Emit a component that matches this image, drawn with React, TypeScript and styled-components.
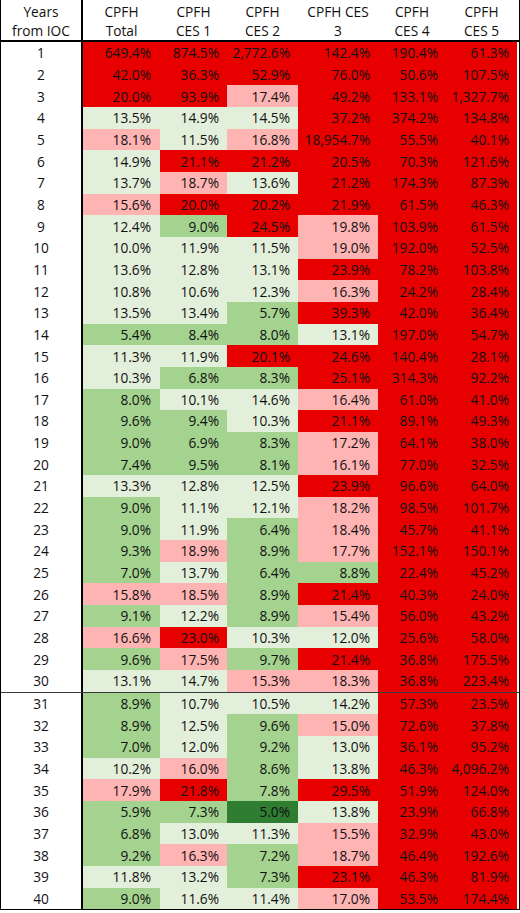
import React from "react"
import styled, { createGlobalStyle } from "styled-components"

type Fill = "R" | "P" | "L" | "G" | "D"

const fills: Record<Fill, string> = {
	R: "#e80000",
	P: "#ffb4b4",
	L: "#e2efda",
	G: "#a3d38f",
	D: "#2e7d31",
}

// header captions, one entry per line as wrapped in the sheet
const headers = [
	["Years", "from IOC"],
	["CPFH", "Total"],
	["CPFH", "CES 1"],
	["CPFH", "CES 2"],
	["CPFH CES", "3"],
	["CPFH", "CES 4"],
	["CPFH", "CES 5"],
]

// each row: six "value fill" pairs, values as shown (without the % sign)
const raw = `
649.4 R|874.5 R|2,772.6 R|142.4 R|190.4 R|61.3 R
42.0 R|36.3 R|52.9 R|76.0 R|50.6 R|107.5 R
20.0 R|93.9 R|17.4 P|49.2 R|133.1 R|1,327.7 R
13.5 L|14.9 L|14.5 L|37.2 R|374.2 R|134.8 R
18.1 P|11.5 L|16.8 P|18,954.7 R|55.5 R|40.1 R
14.9 L|21.1 R|21.2 R|20.5 R|70.3 R|121.6 R
13.7 L|18.7 P|13.6 L|21.2 R|174.3 R|87.3 R
15.6 P|20.0 R|20.2 R|21.9 R|61.5 R|46.3 R
12.4 L|9.0 G|24.5 R|19.8 P|103.9 R|61.5 R
10.0 L|11.9 L|11.5 L|19.0 P|192.0 R|52.5 R
13.6 L|12.8 L|13.1 L|23.9 R|78.2 R|103.8 R
10.8 L|10.6 L|12.3 L|16.3 P|24.2 R|28.4 R
13.5 L|13.4 L|5.7 G|39.3 R|42.0 R|36.4 R
5.4 G|8.4 G|8.0 G|13.1 L|197.0 R|54.7 R
11.3 L|11.9 L|20.1 R|24.6 R|140.4 R|28.1 R
10.3 L|6.8 G|8.3 G|25.1 R|314.3 R|92.2 R
8.0 G|10.1 L|14.6 L|16.4 P|61.0 R|41.0 R
9.6 G|9.4 G|10.3 L|21.1 R|89.1 R|49.3 R
9.0 G|6.9 G|8.3 G|17.2 P|64.1 R|38.0 R
7.4 G|9.5 G|8.1 G|16.1 P|77.0 R|32.5 R
13.3 L|12.8 L|12.5 L|23.9 R|96.6 R|64.0 R
9.0 G|11.1 L|12.1 L|18.2 P|98.5 R|101.7 R
9.0 G|11.9 L|6.4 G|18.4 P|45.7 R|41.1 R
9.3 G|18.9 P|8.9 G|17.7 P|152.1 R|150.1 R
7.0 G|13.7 L|6.4 G|8.8 G|22.4 R|45.2 R
15.8 P|18.5 P|8.9 G|21.4 R|40.3 R|24.0 R
9.1 G|12.2 L|8.9 G|15.4 P|56.0 R|43.2 R
16.6 P|23.0 R|10.3 L|12.0 L|25.6 R|58.0 R
9.6 G|17.5 P|9.7 G|21.4 R|36.8 R|175.5 R
13.1 L|14.7 L|15.3 P|18.3 P|36.8 R|223.4 R
8.9 G|10.7 L|10.5 L|14.2 L|57.3 R|23.5 R
8.9 G|12.5 L|9.6 G|15.0 P|72.6 R|37.8 R
7.0 G|12.0 L|9.2 G|13.0 L|36.1 R|95.2 R
10.2 L|16.0 P|8.6 G|13.8 L|46.3 R|4,096.2 R
17.9 P|21.8 R|7.8 G|29.5 R|51.9 R|124.0 R
5.9 G|7.3 G|5.0 D|13.8 L|23.9 R|66.8 R
6.8 G|13.0 L|11.3 L|15.5 P|32.9 R|43.0 R
9.2 G|16.3 P|7.2 G|18.7 P|46.4 R|192.6 R
11.8 L|13.2 L|7.3 G|23.1 R|46.3 R|81.9 R
9.0 G|11.6 L|11.4 L|17.0 P|53.5 R|174.4 R
`

const rows = raw
	.trim()
	.split("\n")
	.map((line) =>
		line.split("|").map((pair) => {
			const [value, fill] = pair.split(" ")
			return { value: value + "%", fill: fill as Fill }
		})
	)

const GlobalStyle = createGlobalStyle`
	html, body {
		margin: 0;
		padding: 0;
		background: #ffffff;
	}
	body {
		font-family: "Open Sans", "Liberation Sans", sans-serif;
		color: #111111;
	}
`

const Sheet = styled.div`
	width: 520px;
	box-sizing: border-box;
	border-left: 1px solid #000;
	border-right: 1px solid #000;
	border-bottom: 1px solid #000;
	display: flex;
	flex-direction: column;
	font-size: 13.7px;
`

const columns = "82px 77px 67px 71px 80px 68px 71px"

const HeaderRow = styled.div`
	display: grid;
	grid-template-columns: ${columns};
	height: 42px;
	box-sizing: border-box;
	border-bottom: 2px solid #000;
`

const HeaderCell = styled.div<{ $first?: boolean }>`
	display: flex;
	flex-direction: column;
	align-items: center;
	justify-content: center;
	line-height: 19px;
	padding-top: 2px;
	box-sizing: border-box;
	white-space: nowrap;
	border-right: ${(p) => (p.$first ? "2px solid #000" : "none")};
`

const DataRow = styled.div<{ $split?: boolean }>`
	display: grid;
	grid-template-columns: ${columns};
	height: ${(p) => (p.$split ? "22.8px" : "21.67px")};
	box-sizing: border-box;
	border-top: ${(p) => (p.$split ? "1px solid #3a3a3a" : "none")};
`

const YearCell = styled.div`
	display: flex;
	align-items: center;
	justify-content: center;
	box-sizing: border-box;
	border-right: 2px solid #000;
	background: #fff;
`

const ValueCell = styled.div<{ $fill: Fill; $pad: number }>`
	display: flex;
	align-items: center;
	justify-content: flex-end;
	padding-right: ${(p) => p.$pad}px;
	background: ${(p) => fills[p.$fill]};
	white-space: nowrap;
`

const App = () => {
	return (
		<>
			<GlobalStyle />
			<Sheet>
				<HeaderRow>
					{headers.map((lines, i) => (
						<HeaderCell key={i} $first={i === 0}>
							{lines.map((l) => (
								<span key={l}>{l}</span>
							))}
						</HeaderCell>
					))}
				</HeaderRow>
				{rows.map((cells, i) => (
					<DataRow key={i} $split={i === 30}>
						<YearCell>{i + 1}</YearCell>
						{cells.map((c, j) => (
							<ValueCell key={j} $fill={c.fill} $pad={j === 0 ? 9 : 8}>
								{c.value}
							</ValueCell>
						))}
					</DataRow>
				))}
			</Sheet>
		</>
	)
}

export default App
